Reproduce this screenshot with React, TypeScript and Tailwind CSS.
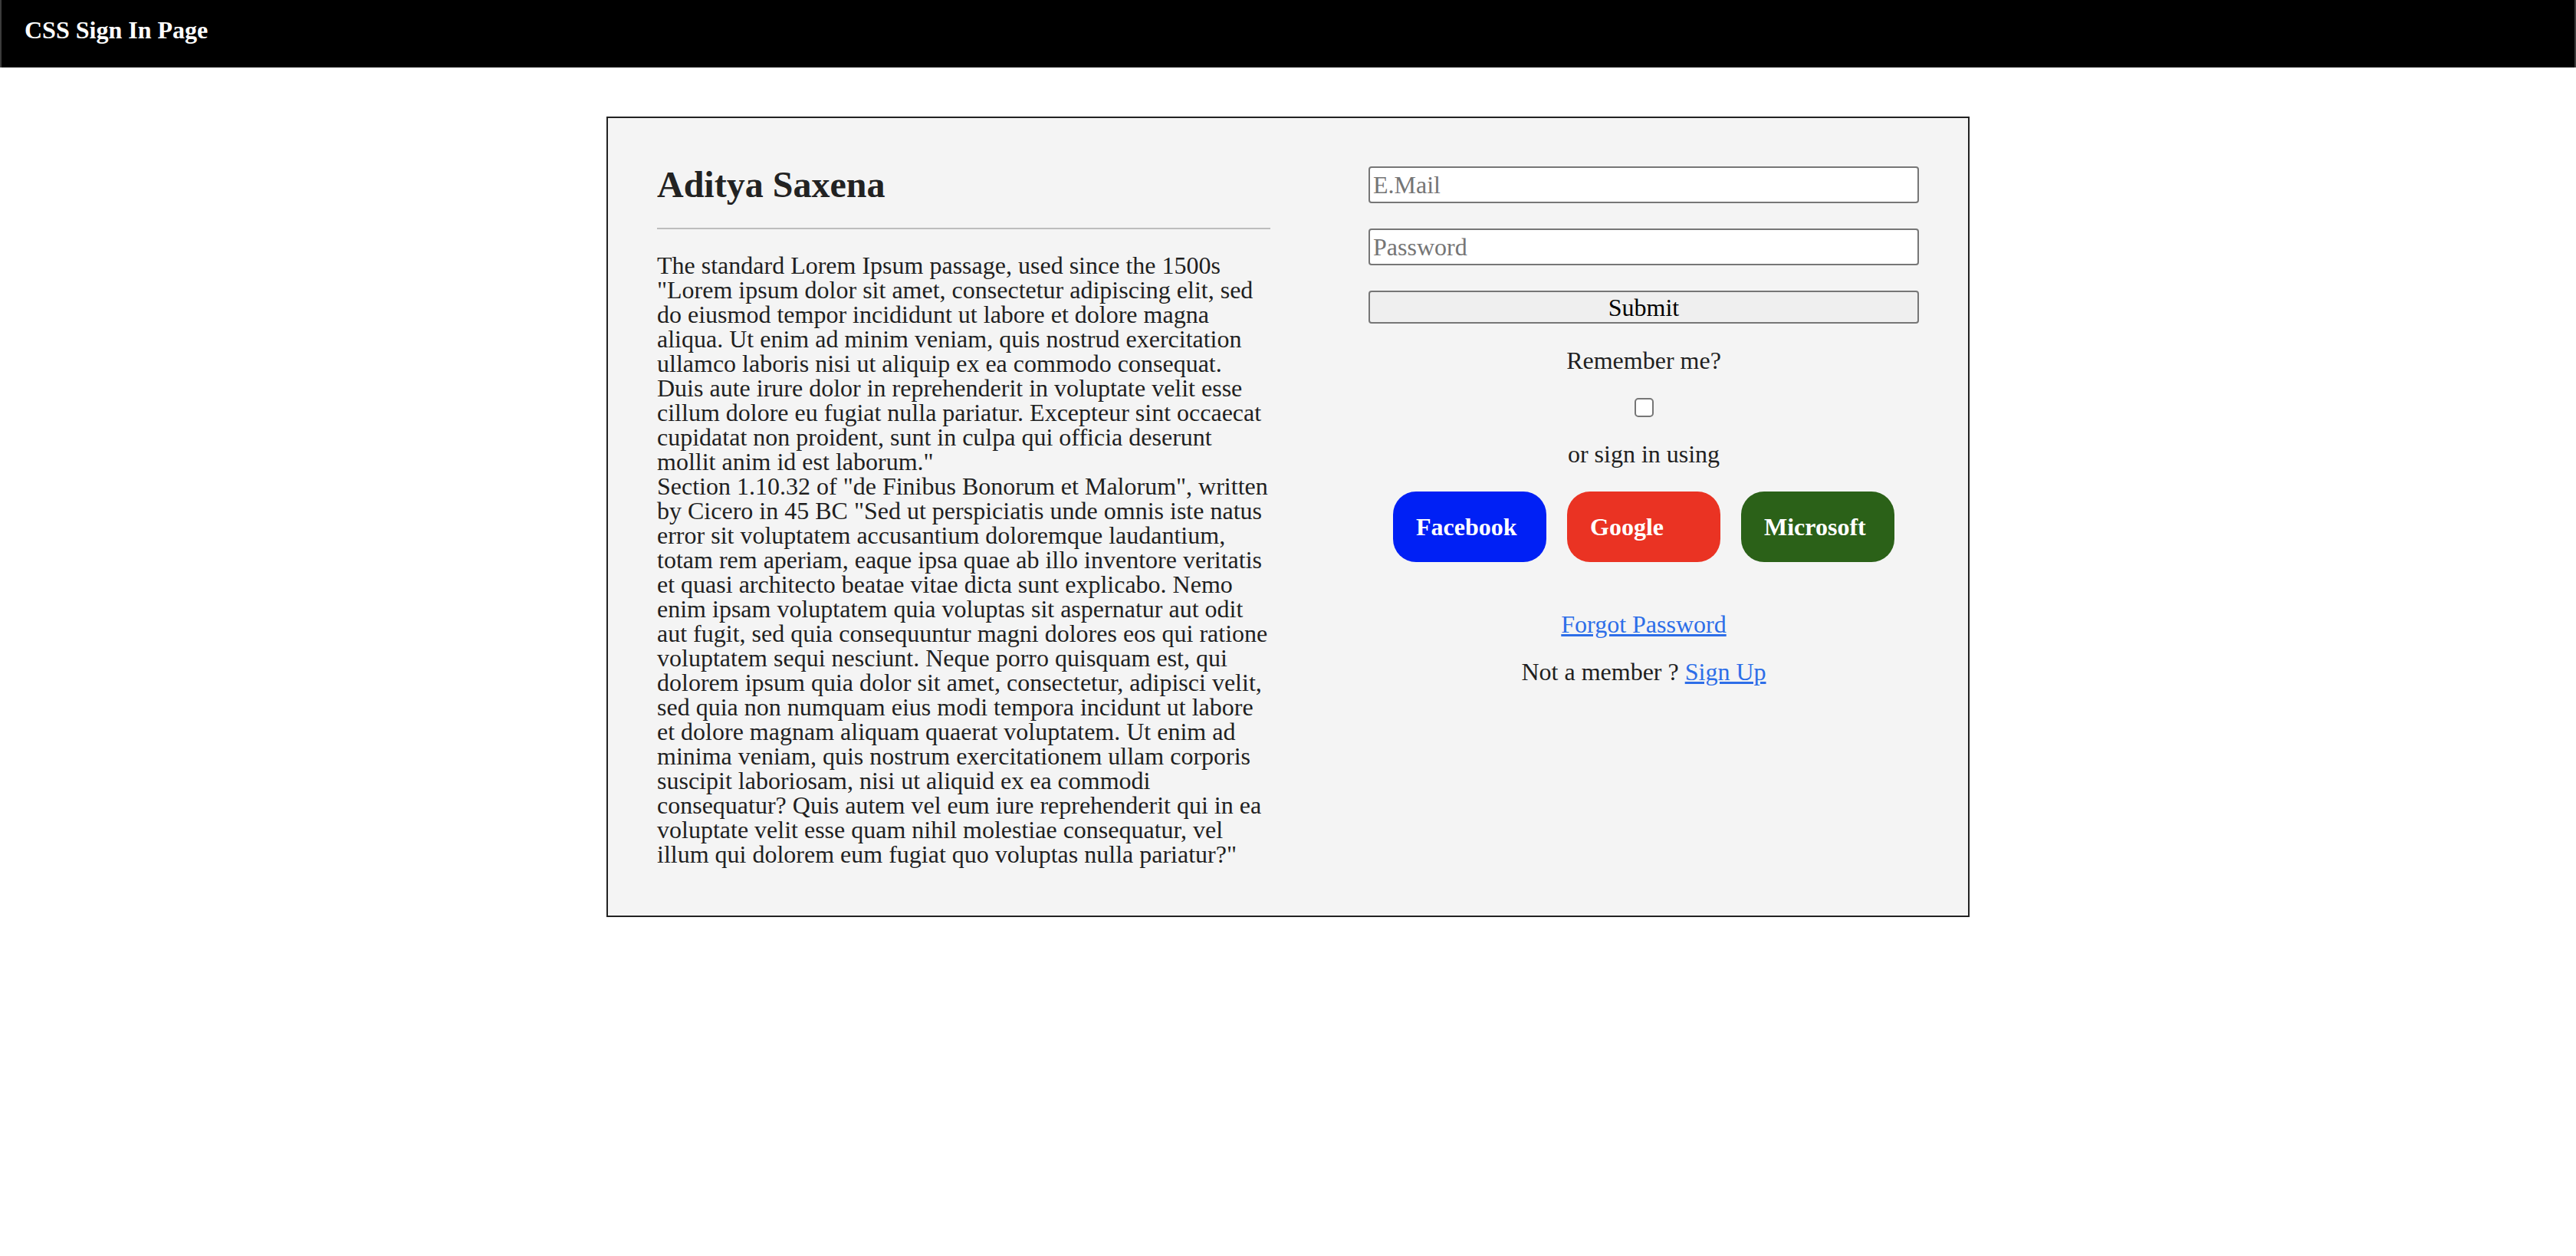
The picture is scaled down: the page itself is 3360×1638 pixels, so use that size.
import React from "react";

const socials = [
  { label: "Facebook", bg: "bg-[#0020f5]" },
  { label: "Google", bg: "bg-[#ea3323]" },
  { label: "Microsoft", bg: "bg-[#2b6118]" },
];

const App: React.FC = () => {
  return (
    <div className="min-h-screen bg-white text-[#1f1f1f] font-['Liberation_Serif',serif]">
      <header className="h-[88px] bg-black border-x-2 border-[#3c3c3c] pl-[30px] pt-[23px]">
        <h3 className="text-[32px] leading-none font-bold text-white">CSS Sign In Page</h3>
      </header>

      <div className="w-[1778px] mx-auto mt-[64px] border-2 border-[#222] bg-[#f4f4f4] pt-[63px] pb-[64px] px-[64px] flex">
        {/* left: about */}
        <div className="w-[800px] shrink-0">
          <h2 className="text-[48px] leading-none font-bold text-[#222]">Aditya Saxena</h2>
          <hr className="mt-[32px] border-0 h-[2px] bg-[#bdbdbd]" />
          <div className="mt-[31px] text-[32px] leading-none">
            <p>
              The standard Lorem Ipsum passage, used since the 1500s "Lorem ipsum dolor sit amet,
              consectetur adipiscing elit, sed do eiusmod tempor incididunt ut labore et dolore magna
              aliqua. Ut enim ad minim veniam, quis nostrud exercitation ullamco laboris nisi ut aliquip
              ex ea commodo consequat. Duis aute irure dolor in reprehenderit in voluptate velit esse
              cillum dolore eu fugiat nulla pariatur. Excepteur sint occaecat cupidatat non proident,
              sunt in culpa qui officia deserunt mollit anim id est laborum."
            </p>
            <p>
              Section 1.10.32 of "de Finibus Bonorum et Malorum", written by Cicero in 45 BC "Sed ut
              perspiciatis unde omnis iste natus error sit voluptatem accusantium doloremque laudantium,
              totam rem aperiam, eaque ipsa quae ab illo inventore veritatis et quasi architecto beatae
              vitae dicta sunt explicabo. Nemo enim ipsam voluptatem quia voluptas sit aspernatur aut odit
              aut fugit, sed quia consequuntur magni dolores eos qui ratione voluptatem sequi nesciunt.
              Neque porro quisquam est, qui dolorem ipsum quia dolor sit amet, consectetur, adipisci
              velit, sed quia non numquam eius modi tempora incidunt ut labore et dolore magnam aliquam
              quaerat voluptatem. Ut enim ad minima veniam, quis nostrum exercitationem ullam corporis
              suscipit laboriosam, nisi ut aliquid ex ea commodi consequatur? Quis autem vel eum iure
              reprehenderit qui in ea voluptate velit esse quam nihil molestiae consequatur, vel illum qui
              dolorem eum fugiat quo voluptas nulla pariatur?"
            </p>
          </div>
        </div>

        {/* right: sign in form */}
        <div className="ml-[128px] flex-1 flex flex-col items-center">
          <input
            type="text"
            placeholder="E.Mail"
            className="w-full h-[48px] border-2 border-[#767676] rounded-[4px] bg-white px-[4px] text-[32px] text-black placeholder:text-[#757575] outline-none"
          />
          <input
            type="password"
            placeholder="Password"
            className="mt-[33px] w-full h-[48px] border-2 border-[#767676] rounded-[4px] bg-white px-[4px] text-[32px] text-black placeholder:text-[#757575] outline-none"
          />
          <button className="mt-[33px] w-full h-[43px] border-2 border-[#767676] rounded-[4px] bg-[#efefef] text-[32px] leading-none text-black">
            Submit
          </button>

          <p className="mt-[32px] text-[32px] leading-none">Remember me?</p>
          <input
            type="checkbox"
            className="mt-[33px] appearance-none w-[25px] h-[25px] border-2 border-[#767676] rounded-[5px] bg-white"
          />
          <p className="mt-[32px] text-[32px] leading-none">or sign in using</p>

          <div className="mt-[33px] flex gap-[27px]">
            {socials.map((s) => (
              <button
                key={s.label}
                className={`${s.bg} w-[200px] h-[92px] rounded-[30px] pl-[30px] flex items-center text-[32px] leading-none font-bold text-white`}
              >
                {s.label}
              </button>
            ))}
          </div>

          <a href="#" className="mt-[65px] text-[32px] leading-none text-[#2d6ee8] underline">
            Forgot Password
          </a>
          <p className="mt-[30px] text-[32px] leading-none">
            Not a member ?{" "}
            <a href="#" className="text-[#2d6ee8] underline">
              Sign Up
            </a>
          </p>
        </div>
      </div>
    </div>
  );
};

export default App;
